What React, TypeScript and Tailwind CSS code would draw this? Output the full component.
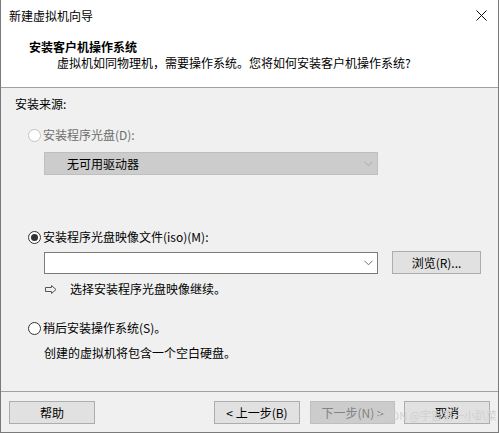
import React from "react";

const font = { fontFamily: '"Noto Sans CJK SC", "Noto Sans", sans-serif' };

function Radio({ checked, disabled }: { checked?: boolean; disabled?: boolean }) {
  return (
    <span
      className={`flex h-[13px] w-[13px] items-center justify-center rounded-full border bg-white ${
        disabled ? "border-[#c4c4c4] bg-[#f5f5f5]" : "border-[#333333]"
      }`}
    >
      {checked && <span className="h-[7px] w-[7px] rounded-full bg-[#333333]" />}
    </span>
  );
}

function Chevron({ color }: { color: string }) {
  return (
    <svg width="9" height="6" viewBox="0 0 9 6" className="shrink-0">
      <path d="M0.5 0.8 L4.5 4.8 L8.5 0.8" fill="none" stroke={color} strokeWidth="1" />
    </svg>
  );
}

function Button({ children, disabled, className = "" }: { children: React.ReactNode; disabled?: boolean; className?: string }) {
  return (
    <div
      className={`flex h-[23px] items-center justify-center border text-[12px] leading-[16px] ${
        disabled ? "border-[#bfbfbf] bg-[#cccccc] text-[#838383]" : "border-[#adadad] bg-[#e1e1e1] text-black"
      } ${className}`}
    >
      {children}
    </div>
  );
}

export default function App() {
  return (
    <div
      style={font}
      className="relative flex h-[433px] w-[499px] flex-col overflow-hidden border-x border-b border-[#7a7a7a] bg-[#f0f0f0] text-[12px] leading-[16px] text-black"
    >
      {/* Title bar */}
      <div className="flex h-[30px] items-center justify-between bg-white pl-[8px] pr-[10px]">
        <span className="pt-[2px]">新建虚拟机向导</span>
        <svg width="11" height="11" viewBox="0 0 11 11" className="mr-[1px] mt-[1px]">
          <path d="M0.5 0.5 L10.5 10.5 M10.5 0.5 L0.5 10.5" stroke="#111" strokeWidth="1" />
        </svg>
      </div>

      {/* Header */}
      <div className="flex h-[58px] flex-col border-b border-[#a0a0a0] bg-white pt-[9px]">
        <div className="pl-[28px] font-bold">安装客户机操作系统</div>
        <div className="pl-[56px]">虚拟机如同物理机，需要操作系统。您将如何安装客户机操作系统?</div>
      </div>

      {/* Body */}
      <div className="flex flex-1 flex-col pl-[14px]">
        <div className="mt-[8px] h-[16px]">安装来源:</div>

        <div className="mt-[15px] flex h-[16px] items-center gap-[2px] pl-[13px] text-[#6d6d6d]">
          <Radio disabled />
          <span>安装程序光盘(D):</span>
        </div>

        <div className="ml-[29px] mt-[9px] flex h-[23px] w-[334px] items-center justify-between border border-[#bfbfbf] bg-[#cccccc] pl-[22px] pr-[4px]">
          <span>无可用驱动器</span>
          <Chevron color="#a8a8a8" />
        </div>

        <div className="mt-[54px] flex h-[16px] items-center gap-[2px] pl-[13px]">
          <Radio checked />
          <span>安装程序光盘映像文件(iso)(M):</span>
        </div>

        <div className="mt-[6px] flex items-center">
          <div className="ml-[29px] mt-[1px] flex h-[22px] w-[334px] items-center justify-end border border-[#7a7a7a] bg-white pr-[4px]">
            <Chevron color="#707070" />
          </div>
          <Button className="ml-[14px] w-[89px]">浏览(R)...</Button>
        </div>

        <div className="mt-[7px] flex h-[16px] items-center pl-[30px]">
          <svg width="12" height="9" viewBox="0 0 12 9" className="mr-[13px]">
            <path d="M0.5 2.5 H6.5 V0.5 L11 4.5 L6.5 8.5 V6.5 H0.5 Z" fill="none" stroke="#555" strokeWidth="1" />
          </svg>
          <span>选择安装程序光盘映像继续。</span>
        </div>

        <div className="mt-[23px] flex h-[16px] items-center gap-[2px] pl-[13px]">
          <Radio />
          <span>稍后安装操作系统(S)。</span>
        </div>

        <div className="mt-[9px] h-[16px] pl-[29px]">创建的虚拟机将包含一个空白硬盘。</div>
      </div>

      {/* Footer */}
      <div className="flex h-[41px] border-t border-[#a0a0a0] pt-[9px]">
        <Button className="ml-[8px] w-[86px]">帮助</Button>
        <Button className="ml-[119px] w-[86px]">&lt; 上一步(B)</Button>
        <Button disabled className="ml-[10px] w-[85px]">下一步(N) &gt;</Button>
        <Button className="ml-[9px] w-[86px]">取消</Button>
      </div>

      <div className="pointer-events-none absolute bottom-[10px] right-[1px] text-[11px] leading-[14px] text-[#d0d0d0]">
        CSDN @宇宙第一小趴菜
      </div>
    </div>
  );
}
